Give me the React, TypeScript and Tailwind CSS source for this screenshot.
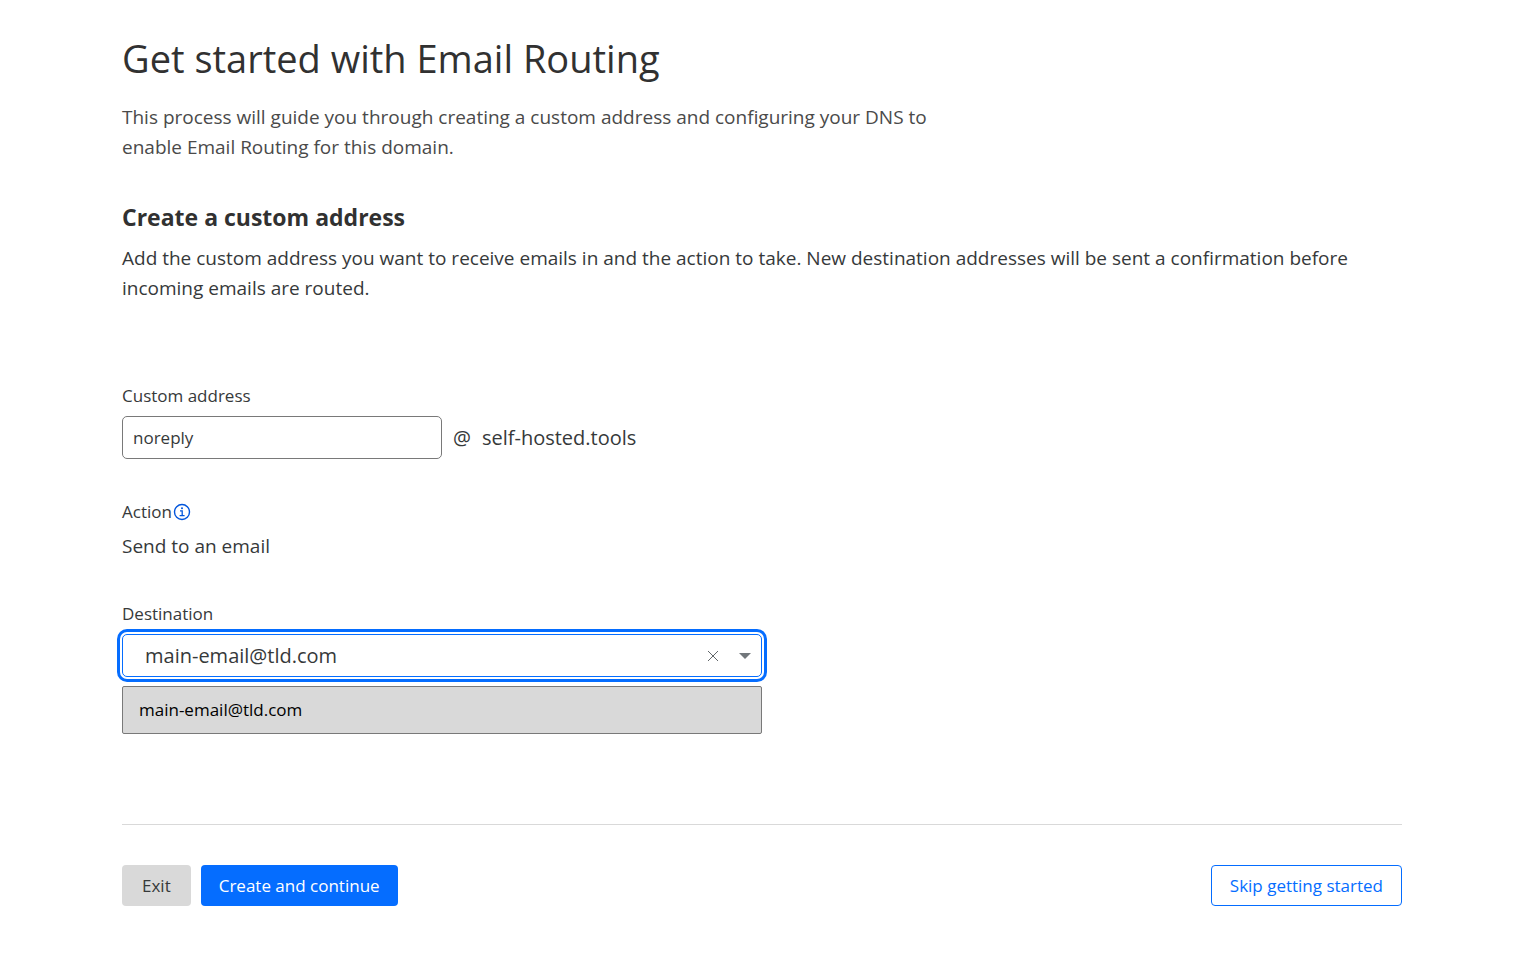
import React, { useState } from 'react';

const labelClass = 'text-[17px] leading-6 text-[#36393a]';

function InfoIcon() {
  return (
    <svg width="18" height="18" viewBox="0 0 18 18" fill="none" stroke="#0055dc" aria-hidden="true">
      <circle cx="9" cy="9" r="7.5" strokeWidth="1.4" />
      <path d="M7 7.8h2.2v4.8M6.6 12.7h5" strokeWidth="1.3" />
      <circle cx="9" cy="5.2" r="1" fill="#0055dc" stroke="none" />
    </svg>
  );
}

function DestinationSelect() {
  const options = ['main-email@tld.com'];
  const [value, setValue] = useState(options[0]);
  const [open, setOpen] = useState(true);

  return (
    <div className="relative w-full max-w-[640px]">
      <div className="flex h-[43px] items-center rounded-[5px] border border-[#056dff] bg-white ring-3 ring-[#056dff] ring-offset-2">
        <input
          id="destination"
          type="text"
          role="combobox"
          aria-expanded={open}
          aria-controls="destination-options"
          value={value}
          onChange={(e) => setValue(e.target.value)}
          onFocus={() => setOpen(true)}
          className="h-full min-w-0 flex-1 bg-transparent pl-[22px] text-xl text-[#36393a] outline-none"
        />
        <button type="button" aria-label="Clear" onClick={() => setValue('')} className="flex h-full w-8 items-center justify-center">
          <svg width="12" height="12" viewBox="0 0 12 12" stroke="#62676a" strokeWidth="1" aria-hidden="true">
            <path d="M1 1l10 10M11 1L1 11" />
          </svg>
        </button>
        <button type="button" aria-label="Show options" onClick={() => setOpen(!open)} className="flex h-full w-8 items-center justify-center">
          <svg width="12" height="6" viewBox="0 0 12 6" fill="#72777b" aria-hidden="true">
            <path d="M0 0h12L6 6z" />
          </svg>
        </button>
      </div>

      {open && (
        <ul id="destination-options" role="listbox" className="absolute inset-x-0 top-[52px] rounded-xs border border-[#797979] bg-[#d9d9d9]">
          {options.map((option) => (
            <li
              key={option}
              role="option"
              aria-selected={option === value}
              onClick={() => {
                setValue(option);
                setOpen(false);
              }}
              className="px-4 py-[11px] text-[17px] leading-6 text-black"
            >
              {option}
            </li>
          ))}
        </ul>
      )}
    </div>
  );
}

export default function App() {
  const [address, setAddress] = useState('noreply');

  return (
    <main className="min-h-screen bg-white pt-7 pr-[113px] pl-[122px] font-['Open_Sans','Noto_Sans',sans-serif] text-[#36393a]">
      <h1 className="text-[38px] leading-[60px] text-[#313131]">Get started with Email Routing</h1>
      <p className="mt-[14px] max-w-[820px] text-[19px] leading-[30px] text-[#4a4a4a]">
        This process will guide you through creating a custom address and configuring your DNS to enable Email Routing for this domain.
      </p>

      <form onSubmit={(e) => e.preventDefault()}>
        <h2 className="mt-[37px] text-[23px] leading-9 font-bold text-[#313131]">Create a custom address</h2>
        <p className="mt-2 text-[19px] leading-[30px]">
          Add the custom address you want to receive emails in and the action to take. New destination addresses will be sent a confirmation before incoming emails are routed.
        </p>

        <div className="mt-[81px]">
          <label htmlFor="custom-address" className={`block ${labelClass}`}>Custom address</label>
          <div className="mt-2 flex items-center gap-[11px] text-xl">
            <input
              id="custom-address"
              type="text"
              value={address}
              onChange={(e) => setAddress(e.target.value)}
              className="h-[43px] w-80 rounded-[5px] border border-[#797979] bg-white px-[10px] text-[17px] outline-none"
            />
            <span>@</span>
            <span>self-hosted.tools</span>
          </div>
        </div>

        <div className="mt-[41px]">
          <div className="flex items-center gap-px">
            <span className={labelClass}>Action</span>
            <button type="button" aria-label="About actions">
              <InfoIcon />
            </button>
          </div>
          <p className="mt-[7px] text-[19px] leading-[30px]">Send to an email</p>
        </div>

        <div className="mt-[41px]">
          <label htmlFor="destination" className={`mb-2 block ${labelClass}`}>Destination</label>
          <DestinationSelect />
        </div>

        <div className="mt-[147px] flex items-center gap-[10px] border-t border-[#d9d9d9] pt-10 text-[17px]">
          <button type="button" className="h-[41px] rounded bg-[#d9d9d9] px-5">Exit</button>
          <button type="submit" className="h-[41px] rounded bg-[#056dff] px-[18px] text-white">Create and continue</button>
          <button type="button" className="ml-auto h-[41px] rounded border border-[#056dff] bg-white px-[18px] text-[#056dff]">Skip getting started</button>
        </div>
      </form>
    </main>
  );
}
